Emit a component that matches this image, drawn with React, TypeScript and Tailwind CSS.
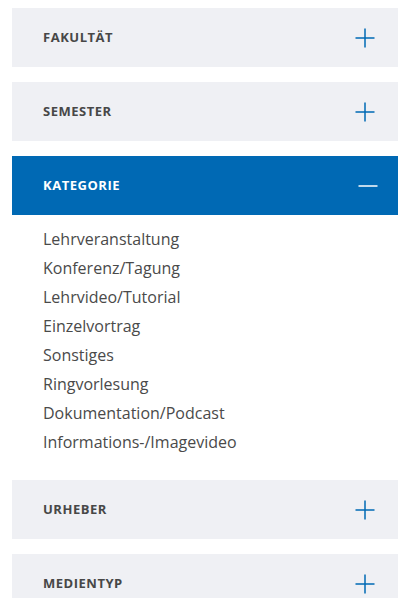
import React, { useState } from "react";

interface FilterSection {
    id: string;
    title: string;
    items: string[];
}

const sections: FilterSection[] = [
    { id: "fakultaet", title: "Fakultät", items: [] },
    { id: "semester", title: "Semester", items: [] },
    {
        id: "kategorie",
        title: "Kategorie",
        items: [
            "Lehrveranstaltung",
            "Konferenz/Tagung",
            "Lehrvideo/Tutorial",
            "Einzelvortrag",
            "Sonstiges",
            "Ringvorlesung",
            "Dokumentation/Podcast",
            "Informations-/Imagevideo",
        ],
    },
    { id: "urheber", title: "Urheber", items: [] },
    { id: "medientyp", title: "Medientyp", items: [] },
];

const PlusIcon = () => (
    <svg width="20" height="20" viewBox="0 0 20 20" className="text-[#0069b4]">
        <path d="M10 0.5v19M0.5 10h19" stroke="currentColor" strokeWidth="1.5" fill="none" />
    </svg>
);

const MinusIcon = () => (
    <svg width="20" height="20" viewBox="0 0 20 20" className="text-white translate-x-[3px]">
        <path d="M0.5 10h19" stroke="currentColor" strokeWidth="1.5" fill="none" />
    </svg>
);

const App: React.FC = () => {
    const [open, setOpen] = useState<string>("kategorie");

    return (
        <div className="h-screen overflow-hidden bg-white pt-2 pl-3 pr-[5px] font-['Open_Sans',sans-serif]">
            {sections.map((s) => {
                const isOpen = open === s.id;
                return (
                    <div key={s.id} className="mb-[15px]">
                        <button
                            onClick={() => setOpen(isOpen ? "" : s.id)}
                            className={`w-full h-[59px] flex items-center justify-between pl-[31px] pr-[23px] ${
                                isOpen ? "bg-[#0069b4] text-white" : "bg-[#eff0f4] text-[#474747]"
                            }`}
                        >
                            <span className="text-[13px] font-bold uppercase tracking-[0.04em]">
                                {s.title}
                            </span>
                            {isOpen ? <MinusIcon /> : <PlusIcon />}
                        </button>
                        {isOpen && (
                            <ul className="pt-[10px] pb-[8px] pl-[31px]">
                                {s.items.map((item) => (
                                    <li
                                        key={item}
                                        className="text-[16px] leading-[29px] text-[#4a4a4a]"
                                    >
                                        {item}
                                    </li>
                                ))}
                            </ul>
                        )}
                    </div>
                );
            })}
        </div>
    );
};

export default App;
